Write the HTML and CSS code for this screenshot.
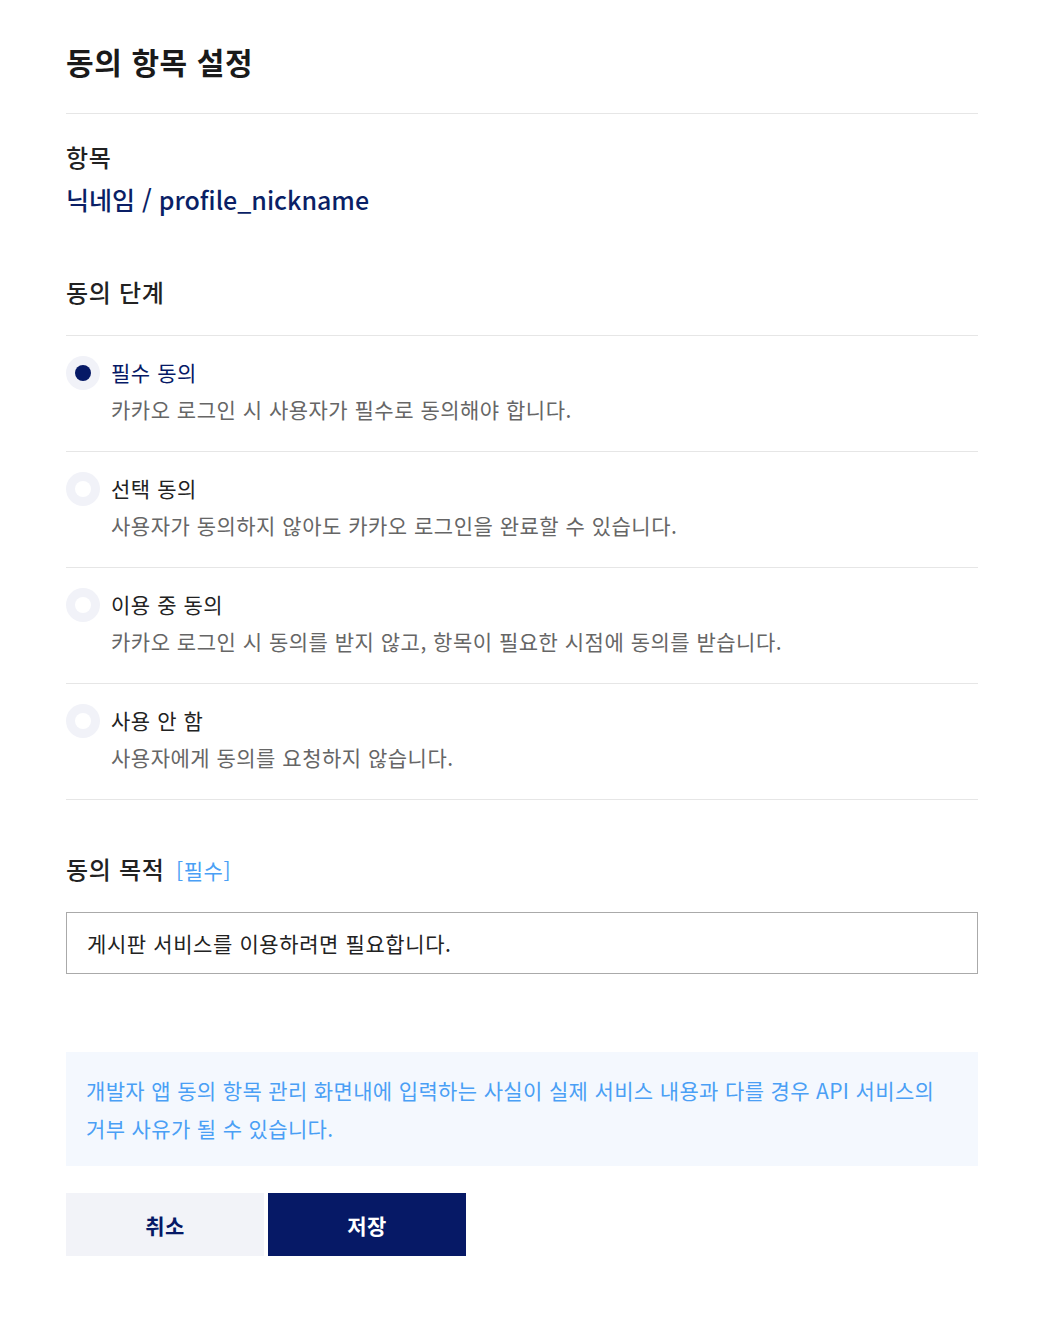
FILE: index.html
```html
<!DOCTYPE html>
<html lang="ko">
<head>
<meta charset="utf-8">
<title>동의 항목 설정</title>
<link rel="stylesheet" href="styles.css">
</head>
<body>
<div class="page">
  <h1 class="title">동의 항목 설정</h1>
  <hr class="divider">

  <div class="item-block">
    <div class="label">항목</div>
    <div class="item-name">닉네임 / profile_nickname</div>
  </div>

  <div class="label section-label">동의 단계</div>
  <ul class="options">
    <li class="option">
      <span class="radio checked"></span>
      <div class="option-text">
        <div class="option-title active">필수 동의</div>
        <div class="option-desc">카카오 로그인 시 사용자가 필수로 동의해야 합니다.</div>
      </div>
    </li>
    <li class="option">
      <span class="radio"></span>
      <div class="option-text">
        <div class="option-title">선택 동의</div>
        <div class="option-desc">사용자가 동의하지 않아도 카카오 로그인을 완료할 수 있습니다.</div>
      </div>
    </li>
    <li class="option">
      <span class="radio"></span>
      <div class="option-text">
        <div class="option-title">이용 중 동의</div>
        <div class="option-desc">카카오 로그인 시 동의를 받지 않고, 항목이 필요한 시점에 동의를 받습니다.</div>
      </div>
    </li>
    <li class="option">
      <span class="radio"></span>
      <div class="option-text">
        <div class="option-title">사용 안 함</div>
        <div class="option-desc">사용자에게 동의를 요청하지 않습니다.</div>
      </div>
    </li>
  </ul>

  <div class="label purpose-label">동의 목적 <span class="required">[필수]</span></div>
  <div class="input">게시판 서비스를 이용하려면 필요합니다.</div>

  <div class="notice">개발자 앱 동의 항목 관리 화면내에 입력하는 사실이 실제 서비스 내용과 다를 경우 API 서비스의 거부 사유가 될 수 있습니다.</div>

  <div class="buttons">
    <button class="btn btn-cancel">취소</button>
    <button class="btn btn-save">저장</button>
  </div>
</div>
</body>
</html>
```

FILE: styles.css
```css
* { box-sizing: border-box; }
body {
  margin: 0;
  background: #fff;
  font-family: "Noto Sans CJK KR", "Noto Sans", sans-serif;
  color: #222;
  word-break: keep-all;
}
.page {
  width: 912px;
  margin-left: 66px;
  padding-top: 41px;
}
.title {
  margin: 0;
  font-size: 30px;
  line-height: 40px;
  font-weight: 700;
  color: #1a1a1a;
  letter-spacing: 0.6px;
}
.divider {
  border: 0;
  border-top: 1px solid #e6e6e6;
  margin: 32px 0 0;
}
.item-block {
  margin-top: 27px;
}
.label {
  font-size: 24px;
  line-height: 32px;
  font-weight: 500;
  color: #222;
  letter-spacing: 0.7px;
}
.item-name {
  margin-top: 8px;
  font-size: 25px;
  line-height: 36px;
  font-weight: 500;
  color: #0a1f66;
}
.section-label {
  margin-top: 59px;
}
.options {
  list-style: none;
  margin: 27px 0 0;
  padding: 0;
  border-top: 1px solid #e6e6e6;
}
.option {
  display: flex;
  gap: 11px;
  padding: 20px 0 26px;
  border-bottom: 1px solid #e6e6e6;
}
.radio {
  flex: none;
  width: 34px;
  height: 34px;
  border-radius: 50%;
  background: #f1f2f8;
  display: flex;
  align-items: center;
  justify-content: center;
}
.radio::after {
  content: "";
  width: 16px;
  height: 16px;
  border-radius: 50%;
  background: #fff;
}
.radio.checked::after {
  background: #061966;
}
.option-title {
  font-size: 21px;
  line-height: 32px;
  color: #222;
  letter-spacing: 0.55px;
}
.option-title.active {
  color: #061966;
}
.option-desc {
  margin-top: 5px;
  font-size: 21px;
  line-height: 32px;
  color: #666;
  letter-spacing: 0.5px;
}
.purpose-label {
  margin-top: 53px;
}
.required {
  margin-left: 4px;
  font-size: 21px;
  font-weight: 400;
  color: #4a9ff5;
  letter-spacing: 0.6px;
}
.input {
  margin-top: 26px;
  height: 62px;
  border: 1px solid #aaa;
  padding: 0 20px;
  font-size: 21px;
  line-height: 60px;
  color: #222;
  letter-spacing: 0.6px;
}
.notice {
  margin-top: 78px;
  background: #f4f8fe;
  padding: 19px 20px;
  font-size: 21px;
  line-height: 38px;
  color: #4a9ff5;
  letter-spacing: 0.35px;
}
.buttons {
  margin-top: 27px;
  display: flex;
  gap: 4px;
}
.btn {
  width: 198px;
  height: 63px;
  border: 0;
  font-family: inherit;
  font-size: 21px;
  font-weight: 700;
  letter-spacing: 0.5px;
  cursor: pointer;
}
.btn-cancel {
  background: #f2f3f8;
  color: #061966;
}
.btn-save {
  background: #061966;
  color: #fff;
}
```
